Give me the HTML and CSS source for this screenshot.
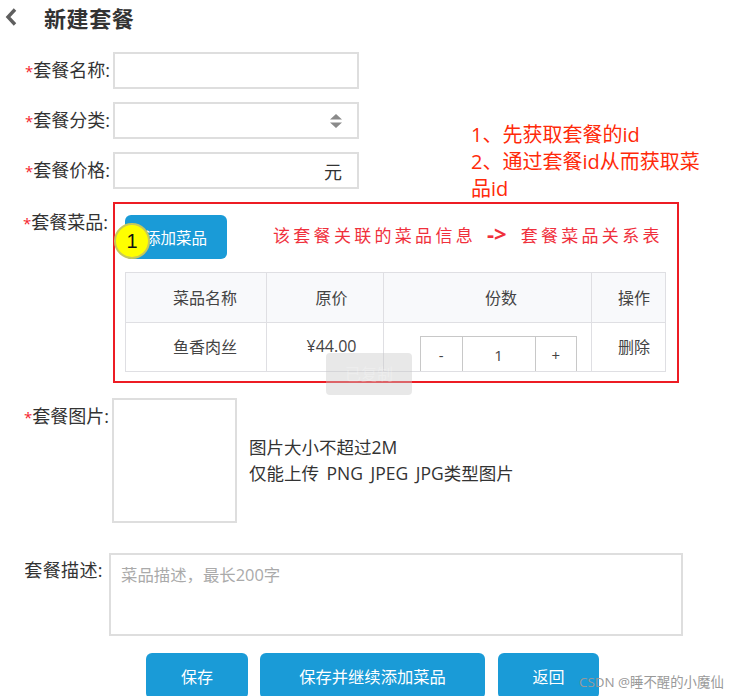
FILE: index.html
```html
<!DOCTYPE html>
<html lang="zh-CN">
<head>
    <meta charset="UTF-8">
    <title>新建套餐</title>
    <link rel="stylesheet" href="styles.css">
</head>
<body>
    <!-- Header -->
    <div class="header">
        <svg class="back" width="12" height="18" viewBox="0 0 12 18"><polyline points="10,1.5 3,9 10,16.5" fill="none" stroke="#5f5f5f" stroke-width="3.4"/></svg>
        <h1>新建套餐</h1>
    </div>

    <!-- Form -->
    <div class="row">
        <label class="label"><span class="star">*</span>套餐名称:</label>
        <div class="field"></div>
    </div>
    <div class="row">
        <label class="label"><span class="star">*</span>套餐分类:</label>
        <div class="field">
            <svg width="12" height="14" viewBox="0 0 12 14"><path d="M6 0 L12 5.5 L0 5.5 Z M0 8.5 L12 8.5 L6 14 Z" fill="#8a8a8a"/></svg>
        </div>
    </div>
    <div class="row">
        <label class="label"><span class="star">*</span>套餐价格:</label>
        <div class="field">元</div>
    </div>

    <div class="row row-top row-dishes">
        <label class="label label-dishes"><span class="star">*</span>套餐菜品:</label>
        <div class="dish-box">
            <div class="toolbar">
                <button class="btn btn-add">添加菜品</button>
                <span class="red-note">该套餐关联的菜品信息<b>-&gt;</b>套餐菜品关系表</span>
            </div>
            <table class="dish-table">
                <tr>
                    <th class="col-name">菜品名称</th>
                    <th class="col-price">原价</th>
                    <th class="col-count">份数</th>
                    <th class="col-op">操作</th>
                </tr>
                <tr>
                    <td class="col-name">鱼香肉丝</td>
                    <td class="col-price">¥44.00</td>
                    <td class="col-stepper">
                        <div class="stepper">
                            <span class="step">-</span>
                            <span class="step step-num">1</span>
                            <span class="step">+</span>
                        </div>
                    </td>
                    <td class="col-op col-del">删除</td>
                </tr>
            </table>
            <span class="marker">1</span>
        </div>
    </div>

    <div class="row row-top row-image">
        <label class="label label-image"><span class="star">*</span>套餐图片:</label>
        <div class="upload"></div>
        <div class="hint">图片大小不超过2M<br>仅能上传 PNG JPEG JPG类型图片</div>
    </div>

    <div class="row row-top row-desc">
        <label class="label label-desc">套餐描述:</label>
        <div class="textarea">菜品描述，最长200字</div>
    </div>

    <div class="actions">
        <button class="btn btn-save">保存</button>
        <button class="btn btn-more">保存并继续添加菜品</button>
        <button class="btn btn-back">返回</button>
    </div>

    <!-- Things lying over the page -->
    <div class="steps-note">1、先获取套餐的id<br>2、通过套餐id从而获取菜品id</div>
    <div class="toast">已复制</div>
    <div class="watermark">CSDN @睡不醒的小魔仙</div>
</body>
</html>
```

FILE: styles.css
```css
/* General Styles */
html, body {
    height: 696px;
    overflow: hidden;
}

body {
    margin: 0;
    position: relative;
    background: #fff;
    color: #333;
    font-family: "Open Sans", "Noto Sans CJK SC", sans-serif;
    font-size: 18px;
}

/* Header */
.header {
    display: flex;
    align-items: center;
    height: 33px;
    margin-bottom: 19px;
}

.back {
    margin-left: 5px;
}

.header h1 {
    margin: 0 0 0 27px;
    font-size: 22px;
    letter-spacing: 0.6px;
    font-weight: bold;
}

/* Rows */
.row {
    display: flex;
    align-items: center;
    margin-bottom: 13px;
}

.row-top {
    align-items: flex-start;
}

.label {
    width: 110px;
    text-align: right;
    line-height: 34px;
    white-space: nowrap;
    flex: none;
}

.star {
    color: #f5222d;
    font-size: 15px;
}

.field {
    box-sizing: border-box;
    display: flex;
    align-items: center;
    justify-content: flex-end;
    width: 246px;
    height: 37px;
    margin-left: 3px;
    padding-right: 15px;
    border: 2px solid #dedede;
}

/* Dishes */
.row-dishes {
    margin-bottom: 15px;
}

.label-dishes {
    line-height: 40px;
    width: 108px;
}

.dish-box {
    box-sizing: border-box;
    position: relative;
    width: 566px;
    height: 181px;
    margin-left: 5px;
    padding: 11px 11px 0 10px;
    border: 2px solid #ed1c24;
}

.toolbar {
    display: flex;
    align-items: center;
    height: 44px;
    margin-bottom: 13px;
}

.btn {
    border: 0;
    border-radius: 6px;
    background: #1a9bd7;
    color: #fff;
    font-family: inherit;
    font-size: 16px;
    padding: 0;
}

.btn-add {
    width: 102px;
    height: 44px;
    font-size: 15.5px;
}

.red-note {
    margin: 0 0 6px 46px;
    color: #f0303c;
    font-size: 17px;
    letter-spacing: 3.3px;
    white-space: pre;
}

.red-note b {
    margin: 0 14px 0 11px;
    letter-spacing: 0;
    font-size: 22px;
    line-height: 20px;
}

.marker {
    box-sizing: border-box;
    position: absolute;
    left: -1px;
    top: 19px;
    width: 36px;
    height: 36px;
    border: 2px solid #c8c85a;
    border-radius: 50%;
    background: #ffff00;
    color: #111;
    font-family: "Liberation Sans", sans-serif;
    font-size: 20px;
    line-height: 32px;
    text-align: center;
}

/* Table */
.dish-table {
    width: 541px;
    height: 100px;
    border-collapse: collapse;
    table-layout: fixed;
    font-size: 16px;
    color: #444;
}

.dish-table th,
.dish-table td {
    box-sizing: border-box;
    border: 1.5px solid #dfdfe3;
    padding: 0;
    font-weight: normal;
}

.dish-table th {
    height: 50px;
    padding-bottom: 2px;
    background: #f8f9fb;
}

.dish-table .col-name {
    width: 141px;
    padding-left: 47px;
    text-align: left;
}

.dish-table .col-price {
    width: 117px;
    padding-left: 13px;
    text-align: center;
}

.dish-table .col-count {
    padding-left: 27px;
    text-align: center;
}

.dish-table .col-op {
    width: 74px;
    padding-left: 26px;
    text-align: left;
}

.dish-table td {
    padding-bottom: 3px;
}

.dish-table .col-stepper {
    padding-bottom: 0;
    vertical-align: bottom;
}

.stepper {
    box-sizing: border-box;
    display: flex;
    width: 157px;
    height: 35px;
    margin-left: 36px;
    border: 1px solid #c8c8c8;
    border-bottom: 0;
}

.step {
    flex: 1;
    line-height: 36px;
    text-align: center;
    font-size: 15px;
}

.step-num {
    flex: none;
    width: 72px;
    border-left: 1px solid #c8c8c8;
    border-right: 1px solid #c8c8c8;
}

/* Image */
.row-image {
    margin-bottom: 30px;
}

.label-image {
    width: 109px;
    line-height: 36px;
}

.upload {
    box-sizing: border-box;
    width: 125px;
    height: 125px;
    margin-left: 3px;
    border: 2px solid #dedede;
}

.hint {
    margin: 36px 0 0 12px;
    font-size: 17.5px;
    word-spacing: 3px;
    line-height: 26px;
}

/* Description */
.row-desc {
    margin-bottom: 17px;
}

.label-desc {
    width: 103px;
    letter-spacing: 0.4px;
}

.textarea {
    box-sizing: border-box;
    width: 574px;
    height: 83px;
    margin-left: 6px;
    padding: 8px 10px;
    border: 2px solid #dedede;
    color: #aaa;
    font-size: 16.4px;
    line-height: 24px;
}

/* Buttons */
.actions {
    display: flex;
    padding-left: 146px;
}

.actions .btn {
    height: 46px;
}

.btn-save {
    width: 102px;
}

.btn-more {
    width: 225px;
    margin-left: 12px;
    font-size: 16.3px;
}

.btn-back {
    width: 101px;
    margin-left: 13px;
}

/* Overlays */
.steps-note {
    position: absolute;
    left: 471px;
    top: 121px;
    width: 235px;
    color: #ff2a0a;
    font-size: 20px;
    line-height: 27px;
}

.toast {
    position: absolute;
    left: 326px;
    top: 353px;
    width: 86px;
    height: 42px;
    border-radius: 4px;
    background: rgba(200, 200, 200, 0.42);
    color: rgba(255, 255, 255, 0.25);
    font-size: 16px;
    line-height: 42px;
    text-align: center;
}

.watermark {
    position: absolute;
    left: 579px;
    top: 673px;
    color: #999;
    font-size: 13.4px;
    line-height: 18px;
    white-space: nowrap;
}
```
